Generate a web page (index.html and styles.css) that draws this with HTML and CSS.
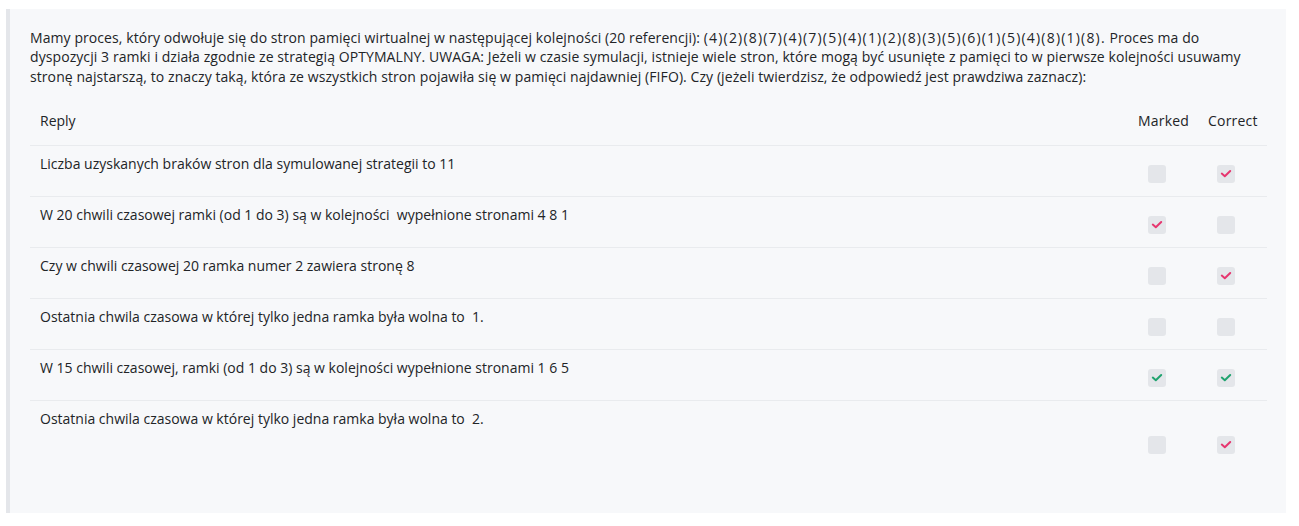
FILE: index.html
```html
<!DOCTYPE html>
<html lang="pl">
<head>
<meta charset="utf-8">
<title>Pytanie</title>
<link rel="stylesheet" href="styles.css">
</head>
<body>
<div class="panel">
  <p class="question">Mamy proces, który odwołuje się do stron pamięci wirtualnej w następującej kolejności (20 referencji): <span class="seq">(4)(2)(8)(7)(4)(7)(5)(4)(1)(2)(8)(3)(5)(6)(1)(5)(4)(8)(1)(8).</span> Proces ma do dyspozycji 3 ramki i działa zgodnie ze strategią OPTYMALNY. UWAGA: Jeżeli w czasie symulacji, istnieje wiele stron, które mogą być usunięte z pamięci to w pierwsze kolejności usuwamy stronę najstarszą, to znaczy taką, która ze wszystkich stron pojawiła się w pamięci najdawniej (FIFO). Czy (jeżeli twierdzisz, że odpowiedź jest prawdziwa zaznacz):</p>
  <div class="table">
    <div class="row head">
      <div class="cell-text">Reply</div>
      <div class="cell-h">Marked</div>
      <div class="cell-h">Correct</div>
    </div>
    <div class="row">
      <div class="cell-text">Liczba uzyskanych braków stron dla symulowanej strategii to 11</div>
      <div class="cell-box"><span class="box"></span></div>
      <div class="cell-box"><span class="box"><svg viewBox="0 0 18 18"><path class="pink" d="M4.8 8.6 L7.8 11.2 L13.2 6"/></svg></span></div>
    </div>
    <div class="row">
      <div class="cell-text">W 20 chwili czasowej ramki (od 1 do 3) są w kolejności &nbsp;wypełnione stronami 4 8 1</div>
      <div class="cell-box"><span class="box"><svg viewBox="0 0 18 18"><path class="pink" d="M4.8 8.6 L7.8 11.2 L13.2 6"/></svg></span></div>
      <div class="cell-box"><span class="box"></span></div>
    </div>
    <div class="row">
      <div class="cell-text">Czy w chwili czasowej 20 ramka numer 2 zawiera stronę 8</div>
      <div class="cell-box"><span class="box"></span></div>
      <div class="cell-box"><span class="box"><svg viewBox="0 0 18 18"><path class="pink" d="M4.8 8.6 L7.8 11.2 L13.2 6"/></svg></span></div>
    </div>
    <div class="row">
      <div class="cell-text">Ostatnia chwila czasowa w której tylko jedna ramka była wolna to &nbsp;1.</div>
      <div class="cell-box"><span class="box"></span></div>
      <div class="cell-box"><span class="box"></span></div>
    </div>
    <div class="row">
      <div class="cell-text">W 15 chwili czasowej, ramki (od 1 do 3) są w kolejności wypełnione stronami 1 6 5</div>
      <div class="cell-box"><span class="box"><svg viewBox="0 0 18 18"><path class="green" d="M4.8 8.6 L7.8 11.2 L13.2 6"/></svg></span></div>
      <div class="cell-box"><span class="box"><svg viewBox="0 0 18 18"><path class="green" d="M4.8 8.6 L7.8 11.2 L13.2 6"/></svg></span></div>
    </div>
    <div class="row tall">
      <div class="cell-text">Ostatnia chwila czasowa w której tylko jedna ramka była wolna to &nbsp;2.</div>
      <div class="cell-box"><span class="box"></span></div>
      <div class="cell-box"><span class="box"><svg viewBox="0 0 18 18"><path class="pink" d="M4.8 8.6 L7.8 11.2 L13.2 6"/></svg></span></div>
    </div>
  </div>
</div>
</body>
</html>
```

FILE: styles.css
```css
html, body {
  margin: 0;
  padding: 0;
  background: #ffffff;
}

body {
  font-family: "Open Sans", "Noto Sans", sans-serif;
  font-size: 14px;
  color: #222427;
}

.panel {
  margin: 9px 13px 0 6px;
  height: 504px;
  box-sizing: border-box;
  border-left: 4px solid #e4e6ea;
  background: #f7f8fa;
  padding: 19px 20px 0 20px;
}

.question {
  margin: 0;
  line-height: 19.3px;
  letter-spacing: 0.08px;
}

.seq {
  letter-spacing: 1.2px;
}

.table {
  margin-top: 15px;
  margin-right: -1px;
}

.row {
  display: grid;
  grid-template-columns: 1fr 70px 69px;
  border-top: 1px solid #e9ebee;
  min-height: 50px;
}

.row.head {
  border-top: none;
  min-height: 0;
}

.row.tall {
  min-height: 82px;
}

.cell-text {
  padding: 8px 10px 0 10px;
  line-height: 20px;
}

.head .cell-text,
.cell-h {
  padding: 10px 10px 14px 10px;
  line-height: 20px;
}

.cell-h {
  letter-spacing: 0.2px;
}

.cell-box {
  padding: 19px 0 0 20px;
}

.cell-box + .cell-box {
  padding-left: 19px;
}

.tall .cell-box {
  padding-top: 35px;
}

.box {
  display: block;
  width: 18px;
  height: 18px;
  border-radius: 3px;
  background: #e4e6ea;
}

.box svg {
  display: block;
  width: 18px;
  height: 18px;
}

.box path {
  fill: none;
  stroke-width: 2;
  stroke-linecap: round;
  stroke-linejoin: round;
}

.box .pink {
  stroke: #e6366f;
}

.box .green {
  stroke: #20a36f;
}
```
